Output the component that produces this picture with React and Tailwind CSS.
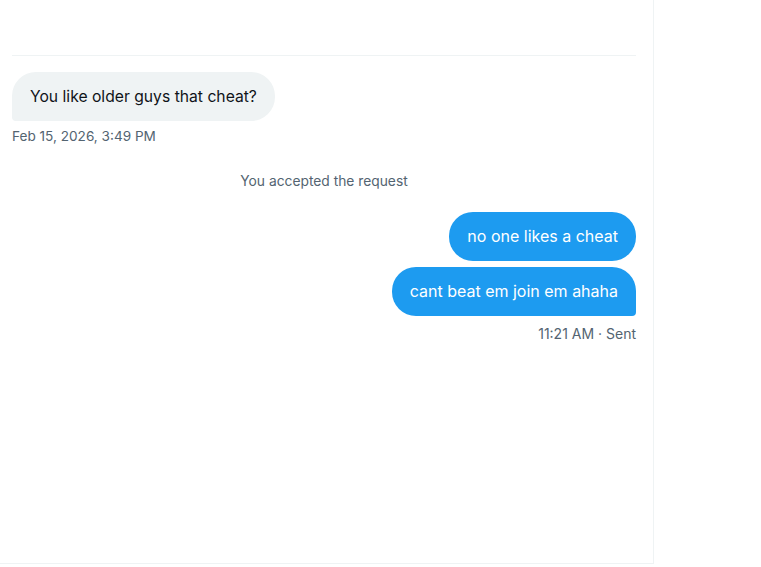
export default function App() {
  const font = { fontFamily: '"Segoe UI", Inter, "Noto Sans", sans-serif' };
  return (
    <div className="flex w-[761px] h-[567px] bg-white overflow-hidden" style={font}>
      <div className="w-[654px] h-[564px] border-r border-b border-[#eff3f4] flex flex-col">
        <div className="ml-[12px] mr-[17px] h-[56px] border-b border-[#eff3f4] shrink-0" />
        <div className="ml-[12px] mr-[17px] flex flex-col">
          <div className="mt-[16px] flex">
            <div className="bg-[#eff3f4] text-[#0f1419] text-[15.7px] leading-[25px] px-[18px] py-[12px] rounded-[24px] rounded-bl-[4px]">
              You like older guys that cheat?
            </div>
          </div>
          <div className="mt-[5px] text-[13.6px] leading-[20px] text-[#536471]">Feb 15, 2026, 3:49 PM</div>
          <div className="mt-[25px] text-center text-[13.8px] leading-[20px] text-[#536471]">You accepted the request</div>
          <div className="mt-[21px] flex flex-col items-end gap-[6px]">
            <div className="bg-[#1d9bf0] text-white text-[16px] leading-[25px] px-[18px] py-[12px] rounded-[24px]">
              no one likes a cheat
            </div>
            <div className="bg-[#1d9bf0] text-white text-[16px] leading-[25px] px-[18px] py-[12px] rounded-[24px] rounded-br-[4px]">
              cant beat em join em ahaha
            </div>
          </div>
          <div className="mt-[8px] text-right text-[14px] leading-[20px] text-[#536471]">11:21 AM · Sent</div>
        </div>
      </div>
      <div className="flex-1" />
    </div>
  );
}
